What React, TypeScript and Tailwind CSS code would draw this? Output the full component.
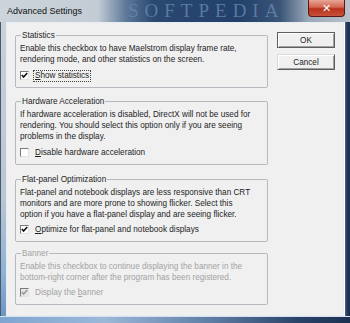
import React from "react";

type GroupProps = {
  title: string;
  disabled?: boolean;
  className?: string;
  children: React.ReactNode;
};

function Group({ title, disabled, className = "", children }: GroupProps) {
  return (
    <fieldset
      className={`border border-[#b4bac0] rounded-[2px] pl-[4px] pr-[4px] pt-[2px] pb-[6px] ${className}`}
    >
      <legend
        className={`ml-[1px] px-[1px] leading-[11px] ${disabled ? "text-[#a3a3a3]" : ""}`}
      >
        {title}
      </legend>
      {children}
    </fieldset>
  );
}

function Check({ checked, disabled }: { checked?: boolean; disabled?: boolean }) {
  return (
    <div
      className={`w-[9px] h-[9px] shrink-0 border-t border-l border-t-[#7a7a7a] border-l-[#7a7a7a] border-b border-r border-b-[#e2e2e2] border-r-[#e2e2e2] ${
        disabled ? "bg-[#e6e6e6]" : "bg-white"
      }`}
    >
      {checked && (
        <svg width="7" height="7" viewBox="0 0 7 7" className="block">
          <polyline
            points="0.8,3 2.6,5 6.2,1"
            fill="none"
            stroke={disabled ? "#9a9a9a" : "#111"}
            strokeWidth="1.6"
          />
        </svg>
      )}
    </div>
  );
}

function Button({ label, isDefault }: { label: string; isDefault?: boolean }) {
  return (
    <div
      className={`w-[58px] h-[16px] flex items-center justify-center bg-[#f0f0f0] border ${
        isDefault
          ? "border-[#5e5e5e]"
          : "border-t-[#d8d8d8] border-l-[#d8d8d8] border-r-[#5e5e5e] border-b-[#5e5e5e]"
      } shadow-[inset_1px_1px_0_#ffffff,inset_-1px_-1px_0_#a0a0a0]`}
    >
      {label}
    </div>
  );
}

export default function App() {
  return (
    <div className="w-[350px] h-[323px] overflow-hidden flex flex-col bg-[#1f3558] font-['Liberation_Sans',Arial,sans-serif] text-[8.2px] leading-[11px] text-[#1e1e1e]">
      {/* title bar */}
      <div className="relative h-[22px] shrink-0 flex items-start bg-[linear-gradient(90deg,#cdd4db_0%,#c3ccd5_28%,#5d7899_36%,#2a4870_44%,#22406a_68%,#3b5578_80%,#9aa8b8_88%,#b9c2cc_100%)]">
        <div className="absolute left-[128px] top-0 h-[22px] font-['Liberation_Serif',serif] text-[19px] leading-[22px] tracking-[6px] text-[#6787ae] opacity-80">
          SOFTPEDIA
        </div>
        <div className="relative pl-[7px] pt-[4px] font-['Liberation_Sans',Arial,sans-serif] text-[9px] leading-[14px] text-[#111]">
          Advanced Settings
        </div>
        <div className="relative ml-auto mr-[5px] w-[37px] h-[17px] rounded-b-[4px] border border-t-0 border-[#5a1a12] bg-[linear-gradient(180deg,#e9a597_0%,#d2654f_45%,#b9321b_55%,#c8503a_100%)] flex items-center justify-center">
          <span className="text-white font-bold text-[11px] leading-[11px] font-['DejaVu_Sans',sans-serif]">
            ✕
          </span>
        </div>
      </div>

      <div className="flex flex-1">
        {/* left frame */}
        <div className="w-[6px] bg-[linear-gradient(180deg,#c9d1d9_0%,#b9c6d3_60%,#8fb2d6_85%,#6d95c2_100%)] border-l border-[#4a5a6e]" />

        {/* client area */}
        <div className="flex-1 flex bg-[#f0f0f0] border border-[#e8edf2] pt-[7px]">
          <div className="ml-[8px] w-[253px] flex flex-col">
            <Group title="Statistics">
              <div className="whitespace-nowrap">
                Enable this checkbox to have Maelstrom display frame rate,
                <br />
                rendering mode, and other statistics on the screen.
              </div>
              <div className="flex items-center h-[11px] mt-[5px]">
                <Check checked />
                <span className="ml-[4px] border border-dotted border-[#444] px-[1px] leading-[10px]">
                  <span className="underline">S</span>how statistics
                </span>
              </div>
            </Group>

            <Group title="Hardware Acceleration" className="mt-[8px]">
              <div className="whitespace-nowrap">
                If hardware acceleration is disabled, DirectX will not be used for
                <br />
                rendering. You should select this option only if you are seeing
                <br />
                problems in the display.
              </div>
              <div className="flex items-center h-[11px] mt-[5px]">
                <Check />
                <span className="ml-[5px] px-[1px]">
                  <span className="underline">D</span>isable hardware acceleration
                </span>
              </div>
            </Group>

            <Group title="Flat-panel Optimization" className="mt-[9px]">
              <div className="whitespace-nowrap">
                Flat-panel and notebook displays are less responsive than CRT
                <br />
                monitors and are more prone to showing flicker. Select this
                <br />
                option if you have a flat-panel display and are seeing flicker.
              </div>
              <div className="flex items-center h-[11px] mt-[4px]">
                <Check checked />
                <span className="ml-[5px] px-[1px]">
                  <span className="underline">O</span>ptimize for flat-panel and notebook displays
                </span>
              </div>
            </Group>

            <Group title="Banner" disabled className="mt-[6px]">
              <div className="whitespace-nowrap text-[#a3a3a3]">
                Enable this checkbox to continue displaying the banner in the
                <br />
                bottom-right corner after the program has been registered.
              </div>
              <div className="flex items-center h-[11px] mt-[4px] text-[#a3a3a3]">
                <Check checked disabled />
                <span className="ml-[5px] px-[1px]">
                  Display the <span className="underline">b</span>anner
                </span>
              </div>
            </Group>
          </div>

          <div className="ml-[9px] pt-[2px] flex flex-col gap-[6px]">
            <Button label="OK" isDefault />
            <Button label="Cancel" />
          </div>
        </div>

        {/* right frame */}
        <div className="w-[6px] bg-[linear-gradient(90deg,#52688a_0%,#22395c_40%,#1a2e4c_100%)] border-l border-[#ffffff]" />
      </div>

      {/* bottom frame */}
      <div className="h-[7px] shrink-0 bg-[linear-gradient(90deg,#7fa6d0_0%,#9ab8d8_30%,#5f7ea6_60%,#2a4368_85%,#1c3152_100%)] border-t border-[#d8e2ec]" />
    </div>
  );
}
